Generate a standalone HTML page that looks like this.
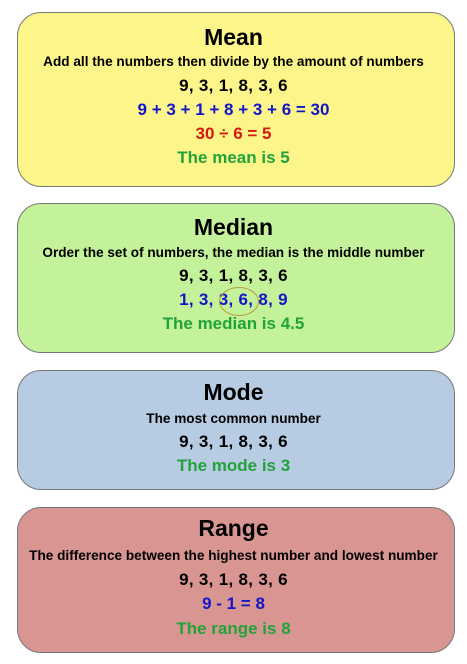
<!DOCTYPE html>
<html><head><style>
body{margin:0;width:467px;height:664px;background:#fff;font-family:"Liberation Sans",Arial,sans-serif;font-weight:bold;position:relative;overflow:hidden}
.b{position:absolute;left:17px;width:438px;border:1.5px solid #777;border-radius:24px;box-sizing:border-box}
.t{position:absolute;left:0;width:467px;text-align:center;line-height:20px;white-space:nowrap}
.h{font-size:23px;line-height:26px}
.s{font-size:13.6px}
.n{font-size:17px}
.l{letter-spacing:0.3px}
.bl{color:#1515c8}.r{color:#d41a10}.g{color:#22a33a}
</style></head><body>
<div class="b" style="top:12px;height:175px;background:#fcf58a"></div>
<div class="b" style="top:203px;height:150px;background:#c3f29b"></div>
<div class="b" style="top:370px;height:120px;background:#b7cbe3"></div>
<div class="b" style="top:507px;height:146px;background:#d99592"></div>

<div class="t h" style="top:24px">Mean</div>
<div class="t s" style="top:52px">Add all the numbers then divide by the amount of numbers</div>
<div class="t n l" style="top:76px">9, 3, 1, 8, 3, 6</div>
<div class="t n bl" style="top:100px">9 + 3 + 1 + 8 + 3 + 6 = 30</div>
<div class="t n r" style="top:124px">30 ÷ 6 = 5</div>
<div class="t n g" style="top:148px">The mean is 5</div>

<div class="t h" style="top:214px">Median</div>
<div class="t s" style="top:243px">Order the set of numbers, the median is the middle number</div>
<div class="t n l" style="top:266px">9, 3, 1, 8, 3, 6</div>
<div class="t n bl l" style="top:290px">1, 3, 3, 6, 8, 9</div>
<div style="position:absolute;left:219px;top:287px;width:38px;height:27px;border:1px solid #b89a3a;border-radius:50%"></div>
<div class="t n g" style="top:314px">The median is 4.5</div>

<div class="t h" style="top:379px">Mode</div>
<div class="t s" style="top:409px">The most common number</div>
<div class="t n l" style="top:432px">9, 3, 1, 8, 3, 6</div>
<div class="t n g" style="top:456px">The mode is 3</div>

<div class="t h" style="top:515px">Range</div>
<div class="t s" style="top:546px">The difference between the highest number and lowest number</div>
<div class="t n l" style="top:570px">9, 3, 1, 8, 3, 6</div>
<div class="t n bl" style="top:594px">9 - 1 = 8</div>
<div class="t n g" style="top:619px">The range is 8</div>
</body></html>
